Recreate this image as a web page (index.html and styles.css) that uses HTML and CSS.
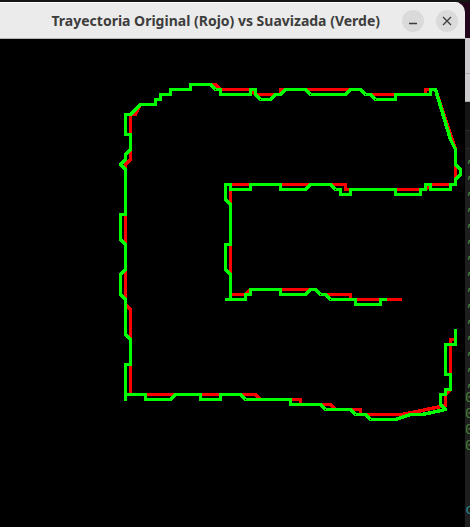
FILE: index.html
```html
<!DOCTYPE html>
<html lang="es">
<head>
<meta charset="utf-8">
<title>Trayectoria Original (Rojo) vs Suavizada (Verde)</title>
<link rel="stylesheet" href="styles.css">
</head>
<body>
<div class="desktop">
  <main class="window">
    <header class="titlebar">
      <h1 class="title">Trayectoria Original (Rojo) vs Suavizada (Verde)</h1>
      <div class="controls">
        <button class="control" type="button" aria-label="Minimizar">
          <svg viewBox="0 0 22 22" aria-hidden="true"><path d="M7 13.5h8"/></svg>
        </button>
        <button class="control" type="button" aria-label="Cerrar">
          <svg viewBox="0 0 22 22" aria-hidden="true"><path d="M7 7l8 8M15 7l-8 8"/></svg>
        </button>
      </div>
    </header>
    <svg class="plot" viewBox="0 39 465 488" role="img" aria-label="Trayectoria original y suavizada">
      <g transform="translate(.5 .5)">
        <polyline class="original" points="125,394 130,394 130,309 125,304 125,164 130,159 130,114 135,114 140,104 155,104 155,99 160,99 160,94 170,94 170,89 190,89 190,84 215,84 220,89 250,89 255,94 280,94 280,89 360,89 365,94 425,94 425,89 435,89 455,149 455,184 430,184 425,189 345,189 345,184 230,184 230,294 245,294 250,289 315,289 320,294 350,294 350,299 400,299"/>
        <polyline class="original" points="130,394 255,394 260,399 300,399 300,404 330,404 335,409 360,409 360,414 402,414 445,405 445,394 450,389 450,339 455,339"/>
        <polyline class="smoothed" points="455,330 455,344 445,344 445,374 450,374 450,389 445,389 445,394 440,394 440,404 445,409 422,414 410,414 395,419 370,419 365,414 355,414 350,409 325,409 320,404 290,404 290,399 245,399 240,394 220,394 220,399 200,399 200,394 175,394 170,399 145,399 145,394 125,394"/>
        <polyline class="smoothed" points="125,399 125,364 130,364 130,339 125,334 125,299 120,294 120,274 125,269 125,244 120,239 120,214 125,214 125,169 120,164 125,159 125,154 130,149 130,134 125,134 125,114 130,114 140,104 155,104 155,99 160,99 160,94 170,94 170,89 190,89 190,84 210,84 215,89 220,89 220,94 250,94 250,89 255,89 255,94 260,99 270,99 275,94 280,94 285,89 305,89 310,94 345,94 350,89 360,89 365,94 370,94 375,99 395,99 395,94 430,94 430,89 435,89 450,139 455,149 455,164 460,169 460,174 455,179 455,184 450,184 450,189 430,189 430,184 425,184 425,189 420,189 420,194 395,194 395,189 350,189 350,194 340,194 340,189 335,189 330,184 310,184 305,189 280,189 280,184 250,184 250,189 230,189 230,184 225,184 225,199 230,204 230,244 225,244 225,269 230,274 230,299"/>
        <polyline class="smoothed" points="226,299 245,299 245,294 250,294 250,289 280,289 280,294 305,294 310,289 315,289 320,294 325,294 330,299 355,299 355,304 380,304 380,299 385,299"/>
      </g>
    </svg>
  </main>
  <aside class="backdrop">
    <div class="wallpaper"></div>
    <div class="bar"></div>
    <div class="bar"></div>
    <div class="tabs"></div>
    <div class="panel"></div>
    <div class="terminal">
      <span>,</span><span>,</span><span>,</span><span>,</span><span>,</span>
      <span>,</span><span>,</span><span>,</span><span>,</span><span>,</span>
      <span>,</span><span>,</span><span>,</span><span>,</span><span>,</span>
      <span>0</span><span>0</span><span>0</span><span>0</span>
      <span></span><span></span><span></span>
      <span class="prompt">c</span>
    </div>
  </aside>
</div>
</body>
</html>
```

FILE: styles.css
```css
* {
  box-sizing: border-box;
}

body {
  margin: 0;
  background: #151515;
  font-family: "Noto Sans", "Open Sans", sans-serif;
}

.desktop {
  display: grid;
  grid-template-columns: 1fr 5px;
  min-height: 100vh;
  padding-top: 2px;
  background: linear-gradient(90deg, #151515, #151515) 0 0 / 100% 2px no-repeat, #22051b;
}

.window {
  display: flex;
  flex-direction: column;
  min-width: 0;
  overflow: hidden;
  background: #000;
  border-radius: 0 10px 0 0;
}

.titlebar {
  display: flex;
  align-items: center;
  justify-content: flex-end;
  gap: 22px;
  height: 37px;
  padding-right: 7px;
  background: #ebebeb;
  border-top: 1px solid #fff;
  border-bottom: 1px solid #b4bab8;
}

.title {
  margin: 0;
  color: #3d3d3d;
  font-size: 14px;
  font-weight: 700;
  line-height: 20px;
  white-space: nowrap;
}

.controls {
  display: flex;
  gap: 12px;
}

.control {
  width: 22px;
  height: 22px;
  padding: 0;
  border: 0;
  border-radius: 50%;
  background: #dadada;
}

.control svg {
  display: block;
  fill: none;
  stroke: #3d3d3d;
  stroke-width: 1.3;
}

.plot {
  display: block;
  width: 100%;
  shape-rendering: crispEdges;
}

.plot polyline {
  fill: none;
  stroke-width: 3.5;
  stroke-linejoin: round;
  stroke-linecap: round;
}

.original {
  stroke: #f00;
}

.smoothed {
  stroke: #0f0;
}

.backdrop {
  display: grid;
  grid-template-rows: 36px 36px 28px 28px 19px 1fr;
  min-width: 0;
  overflow: hidden;
  background: #1e1e1e;
}

.wallpaper {
  background: #22051b;
}

.bar {
  background: #cdcbcd;
  border-bottom: 1px solid #aaa;
}

.tabs {
  background: #151515;
}

.panel {
  background: #1b1b1b;
  border-top: 1px solid #292929;
  border-bottom: 1px solid #292929;
}

.terminal {
  display: grid;
  grid-template-rows: repeat(23, 1fr);
  padding-bottom: 16px;
  color: #467a3a;
  font-family: "DejaVu Sans Mono", monospace;
  font-size: 14px;
  line-height: 16px;
}

.prompt {
  color: #2a8792;
}
```
